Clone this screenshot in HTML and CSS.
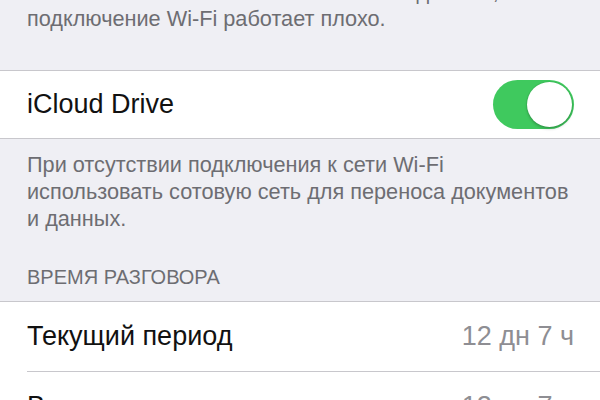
FILE: index.html
```html
<!DOCTYPE html>
<html lang="ru">
<head>
  <meta charset="UTF-8">
  <meta name="viewport" content="width=device-width, initial-scale=1.0">
  <title>Сотовая связь</title>
  <link rel="stylesheet" href="styles.css">
</head>
<body>
  <div class="screen">
    <!-- Wi-Fi assist footer -->
    <div class="footer first">
      Автоматически использовать сотовые данные, если<br>
      подключение Wi-Fi работает плохо.
    </div>

    <!-- iCloud Drive -->
    <div class="group">
      <div class="row short">
        <span class="label">iCloud Drive</span>
        <div class="toggle on"><div class="knob"></div></div>
      </div>
    </div>
    <div class="footer">
      При отсутствии подключения к сети Wi-Fi<br>
      использовать сотовую сеть для переноса документов<br>
      и данных.
    </div>

    <!-- Call time -->
    <div class="header">Время разговора</div>
    <div class="group">
      <div class="row">
        <span class="label">Текущий период</span>
        <span class="value">12 дн 7 ч</span>
      </div>
      <div class="row">
        <span class="label">Всего</span>
        <span class="value">12 дн 7 ч</span>
      </div>
    </div>
  </div>
</body>
</html>
```

FILE: styles.css
```css
/* General */
body {
  margin: 0;
  padding: 0;
  height: 100vh;
  overflow: hidden;
  background-color: #efeff4;
  font-family: "Liberation Sans", Arial, sans-serif;
}

.screen {
  display: flex;
  flex-direction: column;
  margin-top: -22px;
}

/* Grey footers and headers */
.footer {
  padding: 12px 0 0 27px;
  font-size: 21.7px;
  line-height: 27px;
  color: #6d6d72;
  white-space: nowrap;
}

.footer.first {
  padding-top: 0;
  padding-bottom: 38px;
}

.header {
  padding: 33px 27px 12px;
  font-size: 20px;
  line-height: 24px;
  color: #6d6d72;
  text-transform: uppercase;
}

/* White groups */
.group {
  background-color: white;
  border-top: 1px solid #c8c7cc;
  border-bottom: 1px solid #c8c7cc;
  padding-left: 27px;
}

.row {
  display: flex;
  justify-content: space-between;
  align-items: center;
  height: 69px;
  padding-right: 26px;
  font-size: 27px;
  line-height: 69px;
}

.row.short {
  height: 67px;
  line-height: 67px;
}

.row + .row {
  border-top: 1px solid #c8c7cc;
}

.label {
  color: #111;
}

.value {
  color: #8e8e93;
}

/* Switch */
.toggle {
  position: relative;
  width: 81px;
  height: 49px;
  border-radius: 25px;
  background-color: #e5e5ea;
}

.toggle.on {
  background-color: #3fc95e;
}

.toggle .knob {
  position: absolute;
  top: 2px;
  left: 2px;
  width: 45px;
  height: 45px;
  border-radius: 50%;
  background-color: white;
  box-shadow: 0 2px 3px rgba(0, 0, 0, 0.2), 0 0 0 1px rgba(0, 0, 0, 0.06);
}

.toggle.on .knob {
  left: 34px;
}
```
